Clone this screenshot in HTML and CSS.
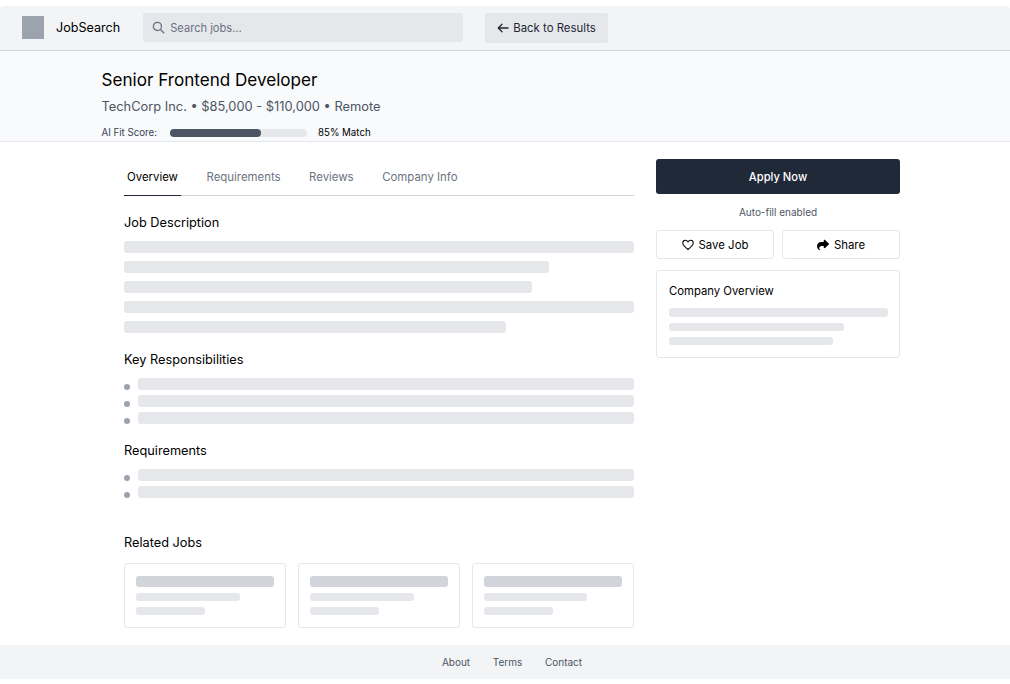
FILE: index.html
```html
<!DOCTYPE html>
<html lang="en">
<head>
    <meta charset="UTF-8">
    <meta name="viewport" content="width=device-width, initial-scale=1.0">
    <title>Job Details</title>
    <link rel="stylesheet" href="styles.css">
</head>
<body>
    <header class="topbar">
        <div class="logo"></div>
        <span class="brand">JobSearch</span>
        <div class="search">
            <svg class="search-icon" viewBox="0 0 24 24" width="13" height="13" fill="none" stroke="currentColor" stroke-width="2.4" stroke-linecap="round"><circle cx="10" cy="10" r="7.5"/><path d="M16 16l6 6"/></svg>
            <span>Search jobs...</span>
        </div>
        <button class="back-btn">
            <svg viewBox="0 0 24 24" width="12" height="12" fill="none" stroke="currentColor" stroke-width="2.6" stroke-linecap="round" stroke-linejoin="round"><path d="M22 12H3M10 4.5L2.5 12l7.5 7.5"/></svg>
            Back to Results
        </button>
    </header>

    <section class="job-head">
        <h1>Senior Frontend Developer</h1>
        <p class="job-meta">TechCorp Inc. • $85,000 - $110,000 • Remote</p>
        <div class="fit">
            <span class="fit-label">AI Fit Score:</span>
            <div class="fit-track"><div class="fit-fill"></div></div>
            <span class="fit-value">85% Match</span>
        </div>
    </section>

    <main class="content">
        <div class="left">
            <nav class="tabs">
                <a class="tab active">Overview</a>
                <a class="tab">Requirements</a>
                <a class="tab">Reviews</a>
                <a class="tab">Company Info</a>
            </nav>

            <h2 class="first">Job Description</h2>
            <div class="lines">
                <div class="line w-full"></div>
                <div class="line w-83"></div>
                <div class="line w-80"></div>
                <div class="line w-full"></div>
                <div class="line w-last"></div>
            </div>

            <h2>Key Responsibilities</h2>
            <ul class="bullets">
                <li><span class="dot"></span><div class="line"></div></li>
                <li><span class="dot"></span><div class="line"></div></li>
                <li><span class="dot"></span><div class="line"></div></li>
            </ul>

            <h2>Requirements</h2>
            <ul class="bullets">
                <li><span class="dot"></span><div class="line"></div></li>
                <li><span class="dot"></span><div class="line"></div></li>
            </ul>

            <h2 class="related-title">Related Jobs</h2>
            <div class="related">
                <div class="card">
                    <div class="card-title"></div>
                    <div class="card-line w-75"></div>
                    <div class="card-line w-50"></div>
                </div>
                <div class="card">
                    <div class="card-title"></div>
                    <div class="card-line w-75"></div>
                    <div class="card-line w-50"></div>
                </div>
                <div class="card">
                    <div class="card-title"></div>
                    <div class="card-line w-75"></div>
                    <div class="card-line w-50"></div>
                </div>
            </div>
        </div>

        <aside class="side">
            <button class="apply">Apply Now</button>
            <p class="autofill">Auto-fill enabled</p>
            <div class="actions">
                <button class="action">
                    <svg viewBox="0 0 512 512" width="12" height="12" fill="none" stroke="currentColor" stroke-width="44" stroke-linejoin="round"><path d="M256 448C120 340 32 262 32 172c0-68 50-116 112-116 46 0 86 26 112 72 26-46 66-72 112-72 62 0 112 48 112 116 0 90-88 168-224 276z"/></svg>
                    Save Job
                </button>
                <button class="action">
                    <svg viewBox="0 0 512 512" width="12" height="12" fill="currentColor"><path d="M307 34c-11 5-19 16-19 29v64H176C79 127 0 206 0 303c0 113 81 163 100 173 3 1 5 2 8 2 10 0 18-8 18-18 0-7-4-13-9-18-10-9-21-24-21-51 0-53 43-96 96-96h96v64c0 13 8 24 19 29s25 3 35-6l160-144c7-6 11-15 11-24s-4-18-11-24L342 46c-10-9-24-11-35-6z"/></svg>
                    Share
                </button>
            </div>
            <div class="company">
                <h3>Company Overview</h3>
                <div class="co-line w-full tall"></div>
                <div class="co-line w-80"></div>
                <div class="co-line w-75"></div>
            </div>
        </aside>
    </main>

    <footer class="footer">
        <a>About</a>
        <a>Terms</a>
        <a>Contact</a>
    </footer>
</body>
</html>
```

FILE: styles.css
```css
* {
    box-sizing: border-box;
}
html, body {
    margin: 0;
    padding: 0;
}
body {
    font-family: Inter, "Liberation Sans", sans-serif;
    background-color: #fff;
    color: #000;
    height: 684px;
    padding-top: 6px;
    overflow: hidden;
}
button {
    font-family: inherit;
    cursor: pointer;
}
h1, h2, h3, p, ul {
    margin: 0;
    padding: 0;
    font-weight: 400;
}
ul {
    list-style: none;
}

.topbar {
    display: flex;
    align-items: center;
    height: 45px;
    padding: 0 22px 1px;
    background-color: #f3f4f6;
    border-bottom: 1px solid #d1d5db;
    border-radius: 4px 4px 0 0;
}
.logo {
    width: 22px;
    height: 23px;
    background-color: #9ca3af;
}
.brand {
    margin-left: 12px;
    font-size: 12.6px;
}
.search {
    display: flex;
    align-items: center;
    gap: 5px;
    width: 320px;
    height: 29px;
    margin-left: 23px;
    padding-left: 9px;
    background-color: #e5e7eb;
    border-radius: 2px;
    color: #6b7280;
    font-size: 11.1px;
}
.back-btn {
    display: flex;
    align-items: center;
    gap: 4px;
    height: 30px;
    margin-left: 22px;
    padding: 0 12px;
    background-color: #e5e7eb;
    border: none;
    border-radius: 2px;
    color: #1f2937;
    font-size: 11.4px;
}

.job-head {
    height: 91px;
    padding: 18px 0 0 101.5px;
    background-color: #f9fafb;
    border-bottom: 1px solid #e5e7eb;
}
.job-head h1 {
    font-size: 17.1px;
    line-height: 22px;
}
.job-meta {
    margin-top: 6px;
    color: #4b5563;
    font-size: 12.85px;
    line-height: 20px;
}
.fit {
    display: flex;
    align-items: center;
    margin-top: 9px;
    font-size: 9.7px;
    line-height: 14px;
}
.fit-label {
    width: 68.5px;
    color: #374151;
}
.fit-track {
    width: 137px;
    height: 8px;
    background-color: #e5e7eb;
    border-radius: 4px;
}
.fit-fill {
    width: 91px;
    height: 8px;
    background-color: #4b5563;
    border-radius: 4px;
}
.fit-value {
    margin-left: 11px;
}

.content {
    display: flex;
    gap: 22px;
    padding: 17px 0 0 124px;
}
.left {
    width: 510px;
}
.side {
    width: 244px;
}

.tabs {
    display: flex;
    gap: 22.6px;
    height: 37px;
    border-bottom: 1px solid #d1d5db;
}
.tab {
    height: 37px;
    padding: 0 3px;
    color: #6b7280;
    font-size: 11.4px;
    line-height: 36px;
}
.tab.active {
    color: #000;
    border-bottom: 1px solid #1f2937;
}

h2 {
    margin-top: 19px;
    font-size: 12.75px;
    line-height: 16px;
}
h2.related-title {
    margin-top: 37px;
}

.lines {
    display: flex;
    flex-direction: column;
    gap: 8px;
    margin-top: 10px;
}
.line {
    height: 12px;
    background-color: #e5e7eb;
    border-radius: 3px;
}
.bullets {
    margin-top: 10px;
}
.bullets li {
    display: flex;
    align-items: center;
    gap: 8px;
    margin-bottom: 5px;
}
.bullets .line {
    flex: 1;
}
.dot {
    width: 6px;
    height: 6px;
    margin-top: 5px;
    background-color: #9ca3af;
    border-radius: 50%;
}
.w-full { width: 100%; }
.w-83 { width: 83.3%; }
.w-80 { width: 80%; }
.w-75 { width: 75%; }
.w-last { width: 74.9%; }
.w-50 { width: 50%; }

.related {
    display: flex;
    gap: 11.4px;
    margin-top: 12px;
}
.card {
    flex: 1;
    height: 65px;
    padding: 12px 11px;
    border: 1px solid #e5e7eb;
    border-radius: 3px;
}
.card-title {
    height: 11px;
    background-color: #d1d5db;
    border-radius: 3px;
}
.card-line {
    height: 8px;
    margin-top: 6px;
    background-color: #e5e7eb;
    border-radius: 3px;
}

.apply {
    display: block;
    width: 100%;
    height: 35px;
    background-color: #1f2937;
    border: none;
    border-radius: 3px;
    color: #fff;
    font-size: 11.2px;
    font-weight: 500;
}
.autofill {
    margin-top: 12px;
    color: #4b5563;
    font-size: 10px;
    line-height: 12px;
    text-align: center;
}
.actions {
    display: flex;
    gap: 8px;
    margin-top: 12px;
}
.action {
    display: flex;
    flex: 1;
    align-items: center;
    justify-content: center;
    gap: 5px;
    height: 29px;
    background-color: #fff;
    border: 1px solid #e5e7eb;
    border-radius: 3px;
    color: #000;
    font-size: 11.4px;
}
.company {
    margin-top: 11px;
    height: 88px;
    padding: 13px 11px 13px 12px;
    border: 1px solid #e5e7eb;
    border-radius: 3px;
}
.company h3 {
    margin-bottom: 10px;
    font-size: 11.3px;
    line-height: 14px;
}
.co-line {
    height: 8px;
    margin-top: 6px;
    background-color: #e5e7eb;
    border-radius: 3px;
}
.co-line.tall {
    height: 9px;
}

.footer {
    display: flex;
    justify-content: center;
    align-items: center;
    gap: 22.7px;
    position: fixed;
    left: 0;
    right: 0;
    top: 645px;
    height: 34px;
    padding-left: 14px;
    background-color: #f3f4f6;
    color: #4b5563;
    font-size: 10px;
}
```
